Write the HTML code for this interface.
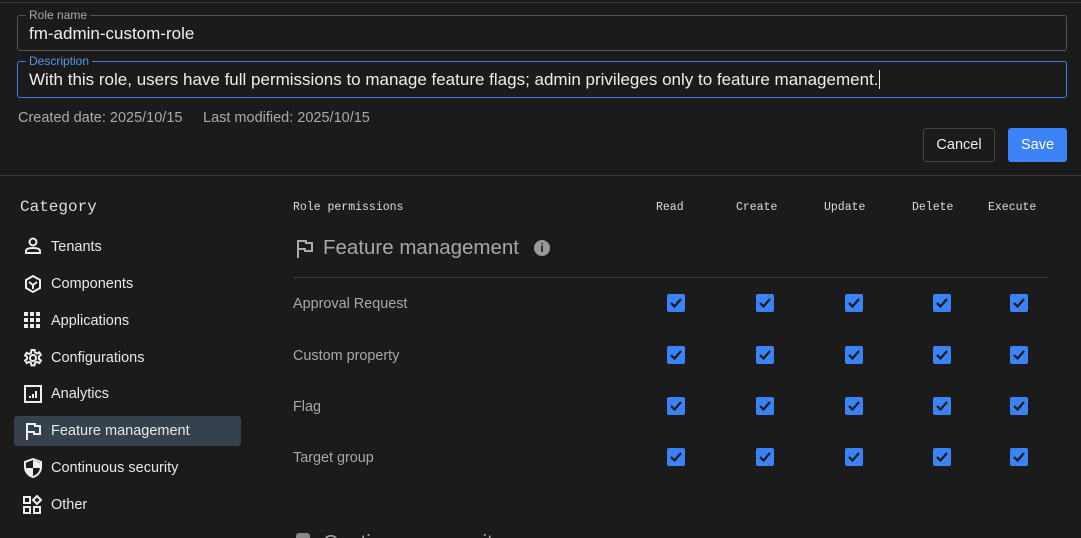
<!DOCTYPE html>
<html><head><style>
*{box-sizing:border-box;margin:0;padding:0}
html,body{width:1081px;height:538px;overflow:hidden}
body{background:#1b1b1b;font-family:"Liberation Sans",sans-serif;color:#e6e6e6;position:relative}
.abs{position:absolute}
.field{position:absolute;left:17px;width:1050px;border:1px solid #555;border-radius:3px}
.lbl{position:absolute;left:8px;top:-8px;background:#1b1b1b;padding:0 3px;font-size:12px;color:#aaa;line-height:14px}
.val{position:absolute;left:11px;font-size:17px;color:#eee;white-space:nowrap}
.mono{font-family:"Liberation Mono",monospace;font-size:11.5px;color:#ddd}
.nav{position:absolute;left:14px;width:227px;height:30px;border-radius:3px;font-size:14.5px;color:#e8e8e8}
.nav span{position:absolute;left:37px;top:7px}
.nav svg{position:absolute;left:9px;top:5px}
.row{position:absolute;left:293px;font-size:14.4px;color:#a8a8a8}
.cb{position:absolute;width:18px;height:18px;background:#3b82f6;border-radius:2px}
.cb svg{position:absolute;left:2px;top:3px}
</style></head><body>
<div class="abs" style="left:0;top:2px;width:1081px;height:1px;background:#3a3a3a"></div>
<div class="field" style="top:15px;height:36px"><div class="lbl">Role name</div><div class="val" style="top:8px">fm-admin-custom-role</div></div>
<div class="field" style="top:61px;height:37px;border-color:#3f7ee0"><div class="lbl" style="color:#5b93e8">Description</div><div class="val" style="top:8px">With this role, users have full permissions to manage feature flags; admin privileges only to feature management.<span style="border-left:1px solid #eee;margin-left:1px"></span></div></div>
<div class="abs" style="left:18px;top:110px;font-size:14.5px;color:#aaa">Created date: 2025/10/15</div>
<div class="abs" style="left:203px;top:110px;font-size:14.5px;color:#aaa">Last modified: 2025/10/15</div>
<div class="abs" style="left:923px;top:128px;width:72px;height:34px;border:1px solid #444;border-radius:3px;font-size:14.5px;color:#eee;text-align:center;line-height:33px">Cancel</div>
<div class="abs" style="left:1008px;top:128px;width:59px;height:34px;background:#3b82f6;border-radius:3px;font-size:14.5px;color:#fff;text-align:center;line-height:34px">Save</div>
<div class="abs" style="left:0;top:175px;width:1081px;height:1px;background:#3a3a3a"></div>

<div class="abs" style="left:20px;top:198px;font-family:'Liberation Mono',monospace;font-size:16px;color:#ddd">Category</div>
<div class="nav" style="top:232px"><svg width="20" height="18" viewBox="0 0 20 18" fill="none" stroke="#eee" stroke-width="2"><circle cx="10" cy="5" r="3.5"/><path d="M3 16v-2c0-2 2-3 7-3s7 1 7 3v2z"/></svg><span>Tenants</span></div>
<div class="nav" style="top:269px"><svg width="20" height="20" viewBox="0 0 20 20" fill="none" stroke="#eee" stroke-width="2"><path d="M10 2l7 4v8l-7 4-7-4V6z"/><path d="M6 8l4 3 4-3M10 11v4"/></svg><span>Components</span></div>
<div class="nav" style="top:306px"><svg width="18" height="18" viewBox="0 0 18 18" fill="#eee"><rect x="1" y="1" width="4" height="4"/><rect x="7" y="1" width="4" height="4"/><rect x="13" y="1" width="4" height="4"/><rect x="1" y="7" width="4" height="4"/><rect x="7" y="7" width="4" height="4"/><rect x="13" y="7" width="4" height="4"/><rect x="1" y="13" width="4" height="4"/><rect x="7" y="13" width="4" height="4"/><rect x="13" y="13" width="4" height="4"/></svg><span>Applications</span></div>
<div class="nav" style="top:343px"><svg width="20" height="20" viewBox="0 0 20 20" fill="none" stroke="#eee" stroke-width="2"><circle cx="10" cy="10" r="3"/><path d="M8.5 2h3l.5 2.5 2 1 2.3-1.2 1.6 2.6-2 1.6v2.4l2 1.6-1.6 2.6-2.3-1.2-2 1-.5 2.5h-3l-.5-2.5-2-1-2.3 1.2-1.6-2.6 2-1.6V9L2 7.4 3.7 4.8 6 6l2-1z"/></svg><span>Configurations</span></div>
<div class="nav" style="top:379px"><svg width="20" height="20" viewBox="0 0 20 20" fill="none" stroke="#eee" stroke-width="2"><rect x="2" y="2" width="16" height="16"/><path d="M7 14v-2M10 14v-4M13 14V7"/></svg><span>Analytics</span></div>
<div class="nav" style="top:416px;background:#35414c"><svg width="20" height="20" viewBox="0 0 20 20" fill="none" stroke="#eee" stroke-width="2"><path d="M4 19V3h8v2h5v8h-6v-2H4"/></svg><span>Feature management</span></div>
<div class="nav" style="top:453px"><svg width="20" height="20" viewBox="0 0 20 20"><path d="M10 1l8 3v5c0 5-4 9-8 10-4-1-8-5-8-10V4z" fill="none" stroke="#eee" stroke-width="2"/><path d="M10 2v8H3c0 4 3 8 7 9v-9h7V5z" fill="#eee"/></svg><span>Continuous security</span></div>
<div class="nav" style="top:490px"><svg width="20" height="20" viewBox="0 0 20 20" fill="none" stroke="#eee" stroke-width="2"><rect x="1" y="2" width="6" height="6"/><rect x="1" y="12" width="6" height="6"/><rect x="11" y="12" width="6" height="6"/><path d="M14 1l4 4-4 4-4-4z"/></svg><span>Other</span></div>

<div class="abs mono" style="left:293px;top:201px">Role permissions</div>
<div class="abs mono" style="left:656px;top:201px">Read</div>
<div class="abs mono" style="left:736px;top:201px">Create</div>
<div class="abs mono" style="left:824px;top:201px">Update</div>
<div class="abs mono" style="left:912px;top:201px">Delete</div>
<div class="abs mono" style="left:988px;top:201px">Execute</div>
<svg class="abs" style="left:296px;top:239px" width="20" height="20" viewBox="0 0 20 20" fill="none" stroke="#aaa" stroke-width="2"><path d="M2 19V2h8v2h6v8H9v-2H2"/></svg>
<div class="abs" style="left:323px;top:236px;font-size:20.5px;color:#a8a8a8">Feature management</div>
<div class="abs" style="left:534px;top:240px;width:16px;height:16px;border-radius:50%;background:#999;color:#1b1b1b;font-size:12px;font-weight:bold;text-align:center;line-height:16px">i</div>
<div class="abs" style="left:293px;top:277px;width:755px;height:1px;background:#3a3a3a"></div>

<div class="row" style="top:296px">Approval Request</div>
<div class="row" style="top:348px">Custom property</div>
<div class="row" style="top:399px">Flag</div>
<div class="row" style="top:450px">Target group</div>

<div id="cbs"></div>
<div class="abs" style="left:296px;top:533px;width:14px;height:10px;background:#888;border-radius:3px 3px 0 0"></div>
<div class="abs" style="left:323px;top:531px;font-size:20.5px;color:#a8a8a8">Continuous security</div>
<script>
var xs=[667,756,845,933,1010],ys=[294,346,397,448],h='';
ys.forEach(function(y){xs.forEach(function(x){h+='<div class="cb" style="left:'+x+'px;top:'+y+'px"><svg width="14" height="12" viewBox="0 0 14 12"><path d="M2 6l3.5 3.5L12 2" fill="none" stroke="#1b1b1b" stroke-width="2.2"/></svg></div>'})});
document.getElementById('cbs').innerHTML=h;
</script>
</body></html>
